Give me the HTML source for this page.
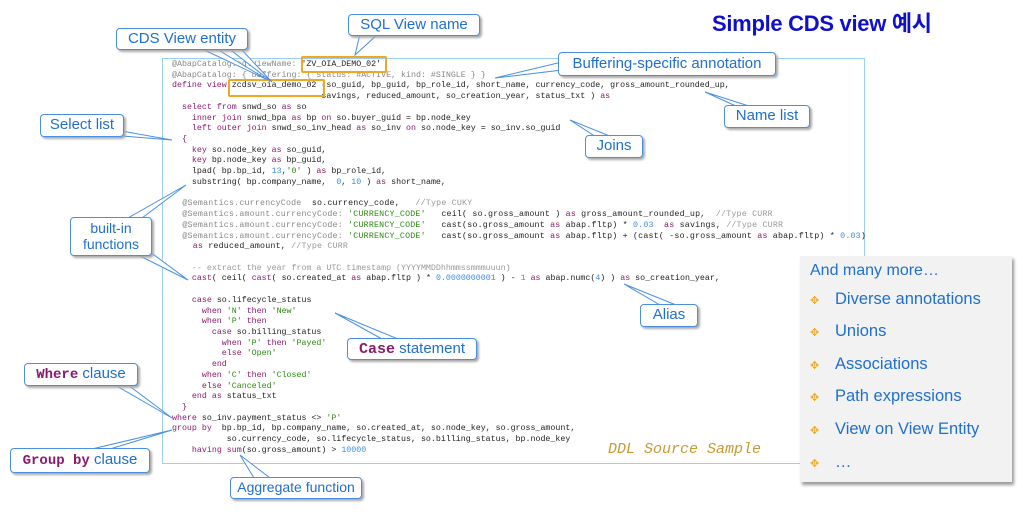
<!DOCTYPE html>
<html><head><meta charset="utf-8"><style>
body{margin:0;width:1026px;height:514px;background:#fff;position:relative;overflow:hidden;font-family:"Liberation Sans",sans-serif}
#code{position:absolute;left:162px;top:58px;width:703px;height:406px;border:1.5px solid #9ccff5;box-sizing:border-box}
pre{position:absolute;left:172px;top:60px;margin:0;font-family:"Liberation Mono",monospace;font-size:8.3px;line-height:10.72px;color:#222}
pre span{line-height:10.72px}
.k{color:#8a1a6e}.a{color:#888}.s{color:#2c8a10}.n{color:#3a8ee6}.c{color:#999}
.sem{letter-spacing:0.2px}
.co{position:absolute;background:#fff;border:1.5px solid #4a90e2;border-radius:4px;color:#1f6fd0;font-size:15px;text-align:center;box-sizing:border-box;box-shadow:2px 2px 2px #aaa;z-index:3}
.ob{position:absolute;border:2px solid #f0a820;border-radius:2px;z-index:2}
svg{position:absolute;left:0;top:0;z-index:2}
#more{position:absolute;left:800px;top:256px;width:212px;height:226px;background:#f2f2f2;box-shadow:2px 3px 3px #999;z-index:4}
#more div{position:absolute;left:10px;color:#1f6fd0;font-size:16.5px}
#more .d{left:10px;color:#f0a820;font-size:11px}
</style></head><body>
<div style="position:absolute;left:712px;top:6px;font-size:22px;font-weight:bold;color:#1010c8;font-family:'Liberation Sans','Noto Sans CJK KR',sans-serif;letter-spacing:-0.3px">Simple CDS view 예시</div>
<div id="code"></div>
<pre><span class="a">@AbapCatalog.sqlViewName: </span>'ZV_OIA_DEMO_02'
<span class="a">@AbapCatalog: { buffering: { status: #ACTIVE, kind: #SINGLE } }</span>
<span class="k">define view</span> zcdsv_oia_demo_02 (so_guid, bp_guid, bp_role_id, short_name, currency_code, gross_amount_rounded_up,
                              savings, reduced_amount, so_creation_year, status_txt ) <span class="k">as</span>
  <span class="k">select from</span> snwd_so <span class="k">as</span> so
    <span class="k">inner join</span> snwd_bpa <span class="k">as</span> bp <span class="k">on</span> so.buyer_guid = bp.node_key
    <span class="k">left outer join</span> snwd_so_inv_head <span class="k">as</span> so_inv <span class="k">on</span> so.node_key = so_inv.so_guid
  <span class="k">{</span>
    <span class="k">key</span> so.node_key <span class="k">as</span> so_guid,
    <span class="k">key</span> bp.node_key <span class="k">as</span> bp_guid,
    lpad( bp.bp_id, <span class="n">13</span>,<span class="s">'0'</span> ) <span class="k">as</span> bp_role_id,
    substring( bp.company_name,  <span class="n">0</span>, <span class="n">10</span> ) <span class="k">as</span> short_name,

<span class="sem">  <span class="a">@Semantics.currencyCode</span>  so.currency_code,   <span class="c">//Type CUKY</span>
  <span class="a">@Semantics.amount.currencyCode:</span> <span class="s">'CURRENCY_CODE'</span>   ceil( so.gross_amount ) <span class="k">as</span> gross_amount_rounded_up,  <span class="c">//Type CURR</span>
  <span class="a">@Semantics.amount.currencyCode:</span> <span class="s">'CURRENCY_CODE'</span>   cast(so.gross_amount <span class="k">as</span> abap.fltp) * <span class="n">0.03</span>  <span class="k">as</span> savings, <span class="c">//Type CURR</span>
  <span class="a">@Semantics.amount.currencyCode:</span> <span class="s">'CURRENCY_CODE'</span>   cast(so.gross_amount <span class="k">as</span> abap.fltp) + (cast( -so.gross_amount <span class="k">as</span> abap.fltp) * <span class="n">0.03</span>)
    <span class="k">as</span> reduced_amount, <span class="c">//Type CURR</span></span>

    <span class="c">-- extract the year from a UTC timestamp (YYYYMMDDhhmmssmmmuuun)</span>
    <span class="k">cast</span>( ceil( <span class="k">cast</span>( so.created_at <span class="k">as</span> abap.fltp ) * <span class="n">0.0000000001</span> ) - <span class="n">1</span> <span class="k">as</span> abap.numc(<span class="n">4</span>) ) <span class="k">as</span> so_creation_year,

    <span class="k">case</span> so.lifecycle_status
      <span class="k">when</span> <span class="s">'N'</span> <span class="k">then</span> <span class="s">'New'</span>
      <span class="k">when</span> <span class="s">'P'</span> <span class="k">then</span>
        <span class="k">case</span> so.billing_status
          <span class="k">when</span> <span class="s">'P'</span> <span class="k">then</span> <span class="s">'Payed'</span>
          <span class="k">else</span> <span class="s">'Open'</span>
        <span class="k">end</span>
      <span class="k">when</span> <span class="s">'C'</span> <span class="k">then</span> <span class="s">'Closed'</span>
      <span class="k">else</span> <span class="s">'Canceled'</span>
    <span class="k">end as</span> status_txt
  <span class="k">}</span>
<span class="k">where</span> so_inv.payment_status &lt;&gt; <span class="s">'P'</span>
<span class="k">group by</span>  bp.bp_id, bp.company_name, so.created_at, so.node_key, so.gross_amount,
           so.currency_code, so.lifecycle_status, so.billing_status, bp.node_key
    <span class="k">having sum</span>(so.gross_amount) &gt; <span class="n">10000</span></pre>
<div style="position:absolute;left:608px;top:441px;font-family:'Liberation Mono',monospace;font-style:italic;font-size:15px;color:#c89a30">DDL Source Sample</div>
<div class="ob" style="left:301px;top:56px;width:82px;height:13px"></div>
<div class="ob" style="left:228px;top:79px;width:93px;height:14px"></div>
<svg width="1026" height="514">
<g fill="#fff" stroke="#4a90e2" stroke-width="1">
<polygon points="200,48 215,48 268,80"/>
<polygon points="228,48 240,48 272,82"/>
<polygon points="360,34 378,34 355,55"/>
<polygon points="562,62 562,70 495,78"/>
<polygon points="738,107 752,107 705,92"/>
<polygon points="116,130 122,136 172,140"/>
<polygon points="596,137 612,137 570,120"/>
<polygon points="128,218 142,218 186,185"/>
<polygon points="138,255 150,252 188,280"/>
<polygon points="660,305 676,305 624,284"/>
<polygon points="382,339 398,339 335,313"/>
<polygon points="115,385 128,385 172,418"/>
<polygon points="92,449 110,449 172,430"/>
<polygon points="254,478 270,478 240,455"/>
</g></svg>
<div class="co" style="left:116px;top:28px;width:132px;height:22px;line-height:19px">CDS View entity</div>
<div class="co" style="left:348px;top:14px;width:132px;height:22px;line-height:19px">SQL View name</div>
<div class="co" style="left:558px;top:52px;width:218px;height:24px;line-height:21px">Buffering-specific annotation</div>
<div class="co" style="left:724px;top:105px;width:86px;height:23px;line-height:20px">Name list</div>
<div class="co" style="left:40px;top:114px;width:84px;height:23px;line-height:20px">Select list</div>
<div class="co" style="left:585px;top:135px;width:58px;height:23px;line-height:20px">Joins</div>
<div class="co" style="left:70px;top:217px;width:82px;height:39px;line-height:16px;font-size:14px;padding-top:2px">built-in<br>functions</div>
<div class="co" style="left:640px;top:304px;width:58px;height:23px;line-height:20px">Alias</div>
<div class="co" style="left:347px;top:338px;width:130px;height:22px;line-height:19px"><span style="font-family:'Liberation Mono',monospace;font-weight:bold;color:#8a1a6e">Case</span> statement</div>
<div class="co" style="left:24px;top:363px;width:114px;height:23px;line-height:20px"><span style="font-family:'Liberation Mono',monospace;font-weight:bold;color:#8a1a6e;font-size:14px">Where</span> clause</div>
<div class="co" style="left:10px;top:448px;width:140px;height:25px;line-height:22px"><span style="font-family:'Liberation Mono',monospace;font-weight:bold;color:#8a1a6e;font-size:14px">Group by</span> clause</div>
<div class="co" style="left:230px;top:477px;width:132px;height:22px;line-height:19px;font-size:14px">Aggregate function</div>
<div id="more">
<div style="top:6px;font-size:16px">And many more…</div>
<div class="d" style="top:38px">✥</div><div style="left:35px;top:34px">Diverse annotations</div>
<div class="d" style="top:70px">✥</div><div style="left:35px;top:66px">Unions</div>
<div class="d" style="top:103px">✥</div><div style="left:35px;top:99px">Associations</div>
<div class="d" style="top:135px">✥</div><div style="left:35px;top:131px">Path expressions</div>
<div class="d" style="top:168px">✥</div><div style="left:35px;top:164px">View on View Entity</div>
<div class="d" style="top:201px">✥</div><div style="left:35px;top:197px">…</div>
</div>
</body></html>
